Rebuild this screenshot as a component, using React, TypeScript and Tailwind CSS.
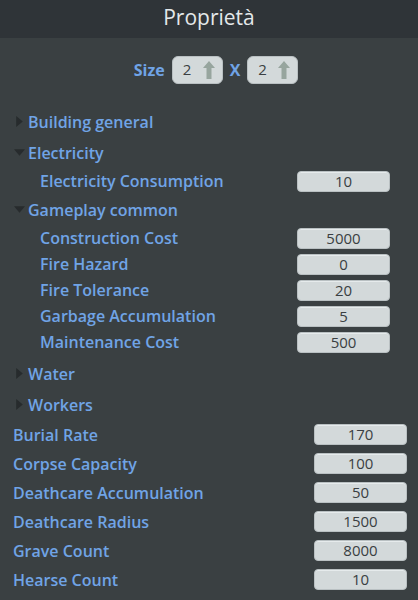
import React from "react";

type Field = { label: string; value: string };

const electricity: Field[] = [{ label: "Electricity Consumption", value: "10" }];

const gameplay: Field[] = [
  { label: "Construction Cost", value: "5000" },
  { label: "Fire Hazard", value: "0" },
  { label: "Fire Tolerance", value: "20" },
  { label: "Garbage Accumulation", value: "5" },
  { label: "Maintenance Cost", value: "500" },
];

const deathcare: Field[] = [
  { label: "Burial Rate", value: "170" },
  { label: "Corpse Capacity", value: "100" },
  { label: "Deathcare Accumulation", value: "50" },
  { label: "Deathcare Radius", value: "1500" },
  { label: "Grave Count", value: "8000" },
  { label: "Hearse Count", value: "10" },
];

const Caret = ({ open }: { open: boolean }) => (
  <svg width="11" height="11" viewBox="0 0 10 10" className="shrink-0">
    {open ? <path d="M0 2 L10 2 L5 8 Z" fill="#272b2d" /> : <path d="M2 0 L8 5 L2 10 Z" fill="#272b2d" />}
  </svg>
);

const ValueBox = ({ value }: { value: string }) => (
  <div className="w-[93px] h-[21px] rounded-[4px] bg-[#d3d9da] border border-[#b9c0c2] flex items-center justify-center text-[15px] font-normal text-[#3a3f42] shadow-[inset_0_1px_0_#e6ebec]">
    {value}
  </div>
);

const Group = ({ title, open }: { title: string; open: boolean }) => (
  <div className="h-[31px] flex items-center gap-[3px] pl-[14px]">
    <Caret open={open} />
    <span>{title}</span>
  </div>
);

const Arrow = () => (
  <svg width="14" height="20" viewBox="0 0 14 20">
    <path d="M7 1 L13 8 L9.5 8 L9.5 19 L4.5 19 L4.5 8 L1 8 Z" fill="#97a59e" />
  </svg>
);

const SizeBox = ({ value }: { value: string }) => (
  <div className="w-[51px] h-[28px] rounded-[6px] bg-[#d3d9da] border border-[#b9c0c2] flex items-center justify-between pl-[10px] pr-[6px] text-[15px] font-normal text-[#3a3f42]">
    <span>{value}</span>
    <Arrow />
  </div>
);

export default function App() {
  return (
    <div
      className="w-[418px] h-[600px] bg-[#3a4042] text-[#70a4e6] font-semibold text-[16px] overflow-hidden"
      style={{ fontFamily: '"Open Sans", "Noto Sans", sans-serif' }}
    >
      <div className="h-[38px] bg-[#2f3438] flex items-center justify-center pb-[2px] text-[21px] font-normal text-[#e4e8ea]">
        Proprietà
      </div>

      <div className="h-[63px] flex items-center justify-center gap-[7px] pl-[14px]">
        <span className="font-bold">Size</span>
        <SizeBox value="2" />
        <span className="font-bold">X</span>
        <SizeBox value="2" />
      </div>

      <div className="flex flex-col pt-[5px]">
        <Group title="Building general" open={false} />
        <Group title="Electricity" open />
        {electricity.map((f) => (
          <div key={f.label} className="h-[26px] flex items-center justify-between pl-[40px] pr-[28px]">
            <span>{f.label}</span>
            <ValueBox value={f.value} />
          </div>
        ))}
        <Group title="Gameplay common" open />
        {gameplay.map((f) => (
          <div key={f.label} className="h-[26px] flex items-center justify-between pl-[40px] pr-[28px]">
            <span>{f.label}</span>
            <ValueBox value={f.value} />
          </div>
        ))}
        <div className="h-[3px]" />
        <Group title="Water" open={false} />
        <Group title="Workers" open={false} />
        {deathcare.map((f) => (
          <div key={f.label} className="h-[29px] flex items-center justify-between pl-[13px] pr-[11px]">
            <span>{f.label}</span>
            <ValueBox value={f.value} />
          </div>
        ))}
      </div>
    </div>
  );
}
